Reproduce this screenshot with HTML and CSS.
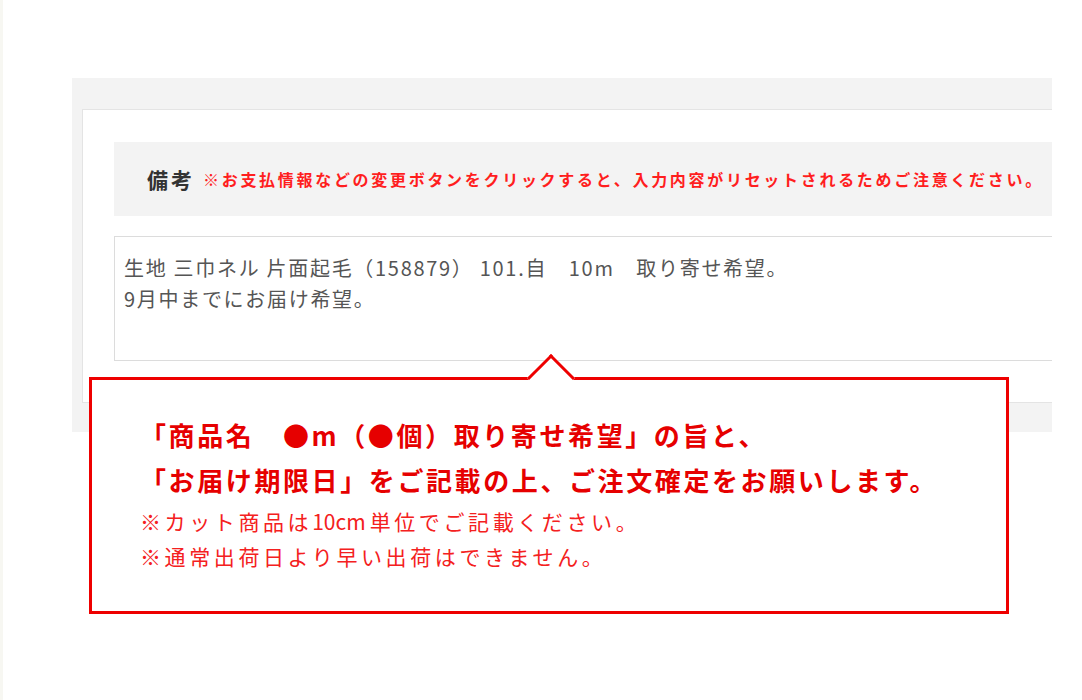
FILE: index.html
```html
<!DOCTYPE html>
<html lang="ja">
<head>
  <meta charset="UTF-8">
  <meta name="viewport" content="width=device-width, initial-scale=1.0">
  <title>備考</title>
  <link rel="stylesheet" href="styles.css">
</head>
<body>
  <div class="page">
    <div class="panel">
      <div class="card">
        <!-- 備考 header -->
        <div class="note-head">
          <span class="note-title">備考</span>
          <span class="note-warn">※お支払情報などの変更ボタンをクリックすると、入力内容がリセットされるためご注意ください。</span>
        </div>
        <div class="note-box">
          生地 三巾ネル 片面起毛（158879） 101.自　10m　取り寄せ希望。<br>
          9月中までにお届け希望。
        </div>
      </div>
    </div>

    <!-- callout over the form -->
    <div class="callout">
      <p class="callout-main">「商品名　●m（●個）取り寄せ希望」の旨と、<br>「お届け期限日」をご記載の上、ご注文確定をお願いします。</p>
      <p class="callout-sub">※カット商品は<span class="num">10cm</span>単位でご記載ください。<br>※通常出荷日より早い出荷はできません。</p>
    </div>
  </div>
</body>
</html>
```

FILE: styles.css
```css
/* page */
body {
  margin: 0;
  background: #fff;
  border-left: 3px solid #f7f7f2;
  font-family: "Noto Sans CJK JP", "Noto Sans", sans-serif;
}

.page {
  position: relative;
  width: 980px;
  margin-left: 69px;
  padding-top: 78px;
  height: 622px;
  overflow: hidden;
}

.panel {
  background: #f3f3f3;
  padding: 31px 0 29px 10px;
}

.card {
  background: #fff;
  border: 1px solid #e4e4e4;
  border-right: none;
  padding: 32px 0 41px 31px;
}

.note-head {
  display: flex;
  align-items: center;
  height: 74px;
  background: #f3f3f3;
  padding-left: 33px;
}

.note-title {
  font-size: 21px;
  font-weight: bold;
  color: #333;
  letter-spacing: 3px;
  margin-right: 8px;
}

.note-warn {
  font-size: 16px;
  font-weight: bold;
  color: #ff1e1e;
  letter-spacing: 2.7px;
  white-space: nowrap;
}

.note-box {
  margin-top: 20px;
  height: 108px;
  border: 1px solid #dcdcdc;
  border-right: none;
  padding: 15px 9px 0;
  font-size: 20px;
  letter-spacing: 1.7px;
  line-height: 31px;
  color: #555;
  white-space: nowrap;
}

/* callout */
.callout {
  position: absolute;
  left: 17px;
  top: 377px;
  width: 920px;
  height: 237px;
  box-sizing: border-box;
  border: 3px solid #ee0000;
  background: #fff;
  padding: 32px 0 34px 48px;
}

.callout::before {
  content: "";
  position: absolute;
  left: 442px;
  top: -19px;
  width: 34px;
  height: 34px;
  box-sizing: border-box;
  background: #fff;
  border-top: 3px solid #ee0000;
  border-left: 3px solid #ee0000;
  transform: rotate(45deg);
}

.callout p {
  margin: 0;
  position: relative;
}

.callout-main {
  font-size: 26px;
  font-weight: bold;
  letter-spacing: 2.6px;
  line-height: 45px;
  color: #e60000;
}

.callout .callout-sub {
  margin-top: 2px;
  font-size: 21px;
  letter-spacing: 3.6px;
  line-height: 35px;
  color: #f42020;
}

.callout-sub .num {
  letter-spacing: 0;
  margin-right: 4px;
}
```
